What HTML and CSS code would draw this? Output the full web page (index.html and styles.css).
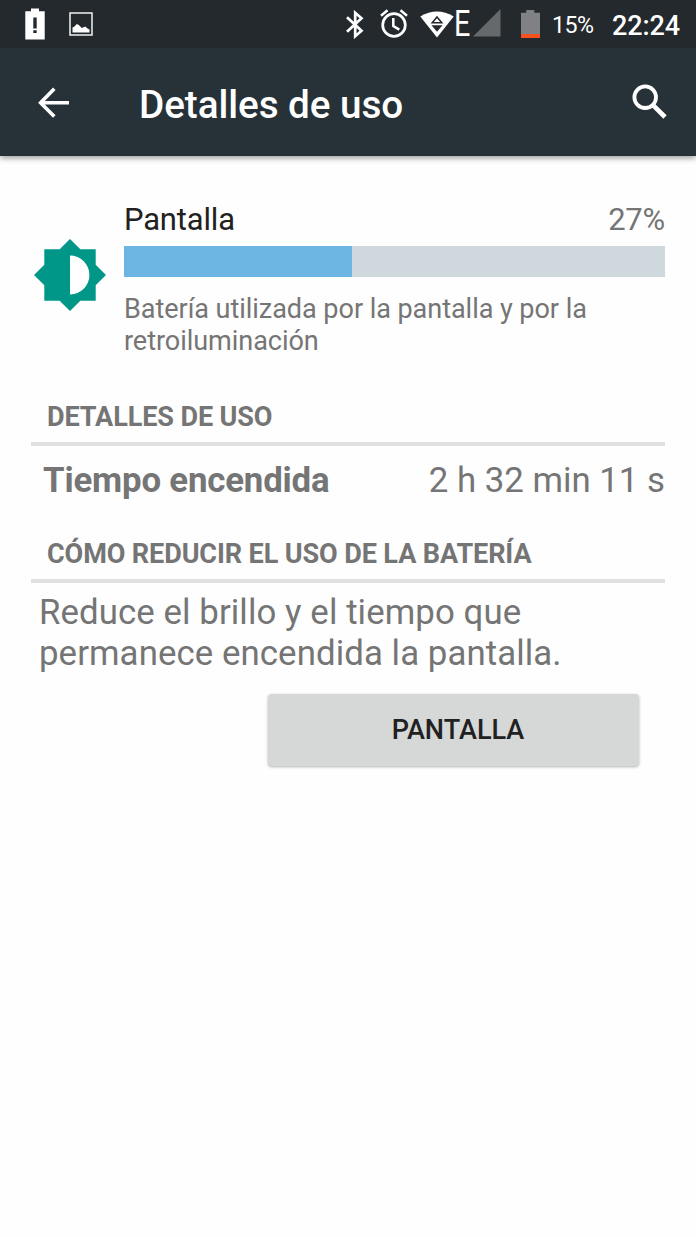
FILE: index.html
```html
<!DOCTYPE html>
<html lang="es">
<head>
    <meta charset="UTF-8">
    <meta name="viewport" content="width=device-width, initial-scale=1.0">
    <title>Detalles de uso</title>
    <link rel="stylesheet" href="styles.css">
</head>
<body>
    <div class="status-bar">
        <svg class="icon-alert" width="20" height="32" viewBox="0 0 20 32">
            <path fill="#fff" fill-rule="evenodd" d="M6 0.5h8v2.7h5.7v28.3H0.3V3.2H6zM8.3 9.5v11h3.4v-11zM8.3 22.2v2.8h3.4v-2.8z"/>
        </svg>
        <svg class="icon-picture" width="24" height="24" viewBox="0 0 24 24">
            <rect x="1" y="1" width="22" height="22" fill="none" stroke="#e4e6e7" stroke-width="1.6"/>
            <path fill="#fff" d="M3.5 20.5v-5l2-1 2.300-2.600 2 1.200 3 3 3.500-1.600 2.200 2 2 1v3z"/>
        </svg>
        <div class="status-right">
            <svg class="icon-bluetooth" width="18" height="29" viewBox="0 0 18 29">
                <path fill="none" stroke="#fff" stroke-width="2.700" d="M1 7.200L15.500 20.800 9.200 26.200V2.800L15.500 8.200 1 21.800"/>
            </svg>
            <svg class="icon-alarm" width="28" height="29" viewBox="0 0 28 29">
                <circle cx="14" cy="16" r="11.300" fill="none" stroke="#fff" stroke-width="2.700"/>
                <path fill="none" stroke="#fff" stroke-width="2.500" d="M13.300 9v8l6 3.600M1 6.700L7.500 1.300M27 6.700L20.500 1.300"/>
            </svg>
            <svg class="icon-wifi" width="34" height="27" viewBox="0 0 34 27">
                <path fill="#fff" d="M0.300 5.500Q17-4.500 33.700 5.500L17 26.500z"/>
                <path fill="none" stroke="#23292d" stroke-width="1.500" d="M12.200 11.800L17 6l4.800 5.800z"/>
                <path fill="#23292d" d="M11.500 14.200h11L17 20.800z"/>
            </svg>
            <div class="network">E</div>
            <svg class="icon-signal" width="28" height="28" viewBox="0 0 28 28">
                <path fill="#66696c" d="M27.500 0v27.500H0z"/>
            </svg>
            <svg class="icon-battery" width="19" height="28" viewBox="0 0 19 28">
                <path fill="#808184" d="M5.300 0h8v2.800H19V24H0V2.800h5.300z"/>
                <path fill="#f4511e" d="M0 24h19v4H0z"/>
            </svg>
            <span class="battery-level">15%</span>
            <span class="clock">22:24</span>
        </div>
    </div>

    <div class="header">
        <svg class="icon-back" width="32" height="32" viewBox="0 0 32 32">
            <path fill="none" stroke="#fff" stroke-width="3.600" d="M16.300 1.800L2.600 15.700l13.700 13.800M2.600 15.700H31"/>
        </svg>
        <h1>Detalles de uso</h1>
        <svg class="icon-search" width="36" height="36" viewBox="0 0 36 36">
            <circle cx="13.200" cy="13.200" r="10.800" fill="none" stroke="#fff" stroke-width="3.800"/>
            <path fill="none" stroke="#fff" stroke-width="4.600" d="M21 21.200l12 11.800"/>
        </svg>
    </div>

    <div class="content">
        <div class="usage">
            <svg class="icon-brightness" width="72" height="72" viewBox="0 0 72 72">
                <path fill="#009688" d="M36 0l10.300 10.300h15.400v15.400L72 36 61.700 46.300v15.400H46.300L36 72 25.700 61.700H10.300V46.300L0 36l10.300-10.300V10.300h15.400z"/>
                <path fill="#fff" d="M36 16.600a19.400 19.400 0 0 1 0 38.800z"/>
            </svg>
            <div class="usage-info">
                <div class="usage-title">
                    <span class="name">Pantalla</span>
                    <span class="percent">27%</span>
                </div>
                <div class="progress"><div class="progress-fill"></div></div>
                <p class="description">Batería utilizada por la pantalla y por la retroiluminación</p>
            </div>
        </div>

        <h2>DETALLES DE USO</h2>
        <div class="detail-row">
            <span class="label">Tiempo encendida</span>
            <span class="value">2 h 32 min 11 s</span>
        </div>

        <h2>CÓMO REDUCIR EL USO DE LA BATERÍA</h2>
        <p class="tip">Reduce el brillo y el tiempo que permanece encendida la pantalla.</p>
        <button class="action-button">PANTALLA</button>
    </div>
</body>
</html>
```
FILE: styles.css
```css
* {
    box-sizing: border-box;
}
body {
    margin: 0;
    min-height: 100vh;
    font-family: Roboto, 'Liberation Sans', sans-serif;
    background-color: #fefefe;
    color: #757575;
}
svg {
    display: block;
    flex: none;
}
h1, h2, p {
    margin: 0;
}

/* status bar */
.status-bar {
    display: flex;
    align-items: flex-start;
    height: 48px;
    padding: 0 16px 0 25px;
    background-color: #23292d;
    color: #fff;
}
.icon-alert {
    margin-top: 8px;
}
.icon-picture {
    margin: 12px 0 0 24px;
}
.status-right {
    display: flex;
    align-items: flex-start;
    margin-left: auto;
}
.icon-bluetooth {
    margin: 10px 16px 0 0;
}
.icon-alarm {
    margin: 9px 12px 0 0;
}
.icon-wifi {
    margin: 11px 0 0;
}
.network {
    width: 20px;
    margin-right: -1px;
    font-size: 36px;
    line-height: 48px;
    transform: scaleX(0.8);
    transform-origin: 0 0;
}
.icon-signal {
    margin: 9px 20px 0 0;
}
.icon-battery {
    margin: 10px 12px 0 0;
}
.battery-level {
    width: 43px;
    margin-right: 17px;
    font-size: 23.2px;
    line-height: 50px;
    letter-spacing: -0.5px;
    white-space: nowrap;
}
.clock {
    font-size: 27px;
    font-weight: 500;
    line-height: 52px;
    letter-spacing: -0.1px;
}

/* title bar */
.header {
    display: flex;
    align-items: flex-start;
    height: 108px;
    padding: 0 29px 0 38px;
    background-color: #263238;
    color: #fff;
    box-shadow: 0 2px 6px rgba(0, 0, 0, 0.4);
    /* keeps the shadow off the status bar */
    clip-path: inset(0 0 -12px 0);
}
.icon-back {
    margin-top: 39px;
}
.header h1 {
    flex: 1;
    margin-left: 69px;
    font-size: 38.67px;
    font-weight: 500;
    line-height: 113px;
    letter-spacing: -0.05px;
}
.icon-search {
    margin: 36px -1px 0 0;
}

.content {
    padding: 45px 31px 0;
}
.usage {
    display: flex;
    align-items: flex-start;
}
.icon-brightness {
    margin: 38px 18px 0 3px;
}
.usage-info {
    flex: 1;
}
.usage-title {
    display: flex;
    justify-content: space-between;
    height: 45px;
    font-size: 30.93px;
    line-height: 37px;
}
.usage-title .name {
    color: #212121;
    letter-spacing: -0.15px;
}
.usage-title .percent {
    letter-spacing: -0.2px;
}
.progress {
    height: 31px;
    background-color: #cfd8dc;
}
.progress-fill {
    width: 228px;
    height: 100%;
    background-color: #6db5e3;
}
.description {
    margin-top: 16px;
    font-size: 27.07px;
    line-height: 32px;
    letter-spacing: -0.06px;
}
h2 {
    height: 50px;
    padding-left: 16px;
    border-bottom: 4px solid #e0e0e0;
    font-size: 27.07px;
    font-weight: 700;
    line-height: 42px;
    letter-spacing: -0.12px;
}
.usage + h2 {
    margin-top: 39px;
}
.detail-row {
    display: flex;
    justify-content: space-between;
    height: 87px;
    padding-left: 12px;
    font-size: 34.8px;
    line-height: 68px;
}
.detail-row .label {
    font-weight: 700;
    letter-spacing: -0.18px;
}
.tip {
    padding: 9px 60px 0 8px;
    font-size: 34.8px;
    line-height: 41px;
    letter-spacing: 0.08px;
}
.action-button {
    display: block;
    width: 371px;
    height: 72px;
    margin: 20px 26px 0 auto;
    padding: 1px 0 0 9px;
    border: none;
    border-radius: 4px;
    background-color: #d6d7d7;
    box-shadow: 0 1px 3px rgba(0, 0, 0, 0.3);
    color: #212121;
    font-family: inherit;
    font-size: 27.07px;
    font-weight: 500;
    line-height: 71px;
}
```
